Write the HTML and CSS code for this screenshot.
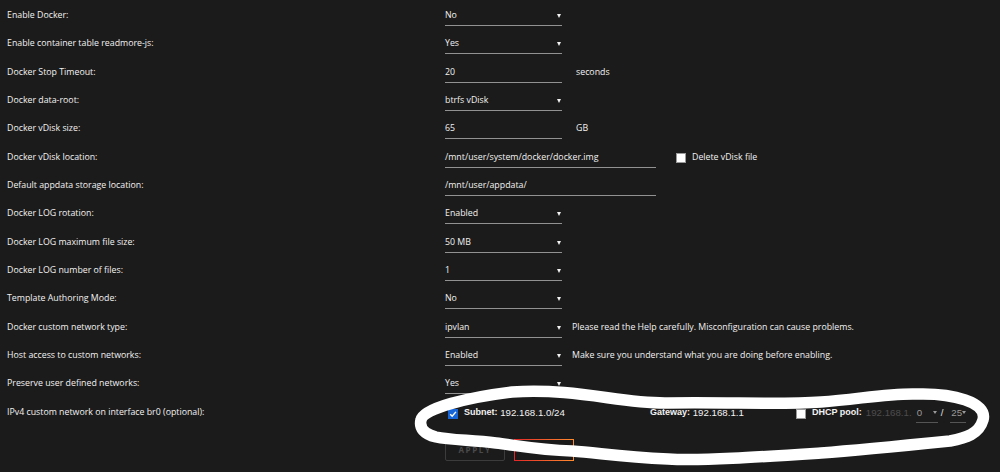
FILE: index.html
```html
<!DOCTYPE html>
<html>
<head>
<meta charset="utf-8">
<link rel="stylesheet" href="styles.css">
</head>
<body>
<div class="page">
  <div class="row"><div class="label">Enable Docker:</div><div class="field"><div class="select sel-s"><span>No</span><span class="caret"></span></div></div></div>
  <div class="row"><div class="label">Enable container table readmore-js:</div><div class="field"><div class="select sel-s"><span>Yes</span><span class="caret"></span></div></div></div>
  <div class="row"><div class="label">Docker Stop Timeout:</div><div class="field"><div class="select sel-s"><span>20</span></div><span class="unit">seconds</span></div></div>
  <div class="row"><div class="label">Docker data-root:</div><div class="field"><div class="select sel-s"><span>btrfs vDisk</span><span class="caret"></span></div></div></div>
  <div class="row"><div class="label">Docker vDisk size:</div><div class="field"><div class="select sel-s"><span>65</span></div><span class="unit">GB</span></div></div>
  <div class="row"><div class="label">Docker vDisk location:</div><div class="field"><div class="select sel-w"><span>/mnt/user/system/docker/docker.img</span></div><span class="box"></span><span class="boxlabel">Delete vDisk file</span></div></div>
  <div class="row"><div class="label">Default appdata storage location:</div><div class="field"><div class="select sel-w"><span>/mnt/user/appdata/</span></div></div></div>
  <div class="row"><div class="label">Docker LOG rotation:</div><div class="field"><div class="select sel-s"><span>Enabled</span><span class="caret"></span></div></div></div>
  <div class="row"><div class="label">Docker LOG maximum file size:</div><div class="field"><div class="select sel-s"><span>50 MB</span><span class="caret"></span></div></div></div>
  <div class="row"><div class="label">Docker LOG number of files:</div><div class="field"><div class="select sel-s"><span>1</span><span class="caret"></span></div></div></div>
  <div class="row"><div class="label">Template Authoring Mode:</div><div class="field"><div class="select sel-s"><span>No</span><span class="caret"></span></div></div></div>
  <div class="row"><div class="label">Docker custom network type:</div><div class="field"><div class="select sel-s"><span>ipvlan</span><span class="caret"></span></div><span class="help">Please read the Help carefully. Misconfiguration can cause problems.</span></div></div>
  <div class="row"><div class="label">Host access to custom networks:</div><div class="field"><div class="select sel-s"><span>Enabled</span><span class="caret"></span></div><span class="help">Make sure you understand what you are doing before enabling.</span></div></div>
  <div class="row"><div class="label">Preserve user defined networks:</div><div class="field"><div class="select sel-s"><span>Yes</span><span class="caret"></span></div></div></div>
  <div class="row"><div class="label">IPv4 custom network on interface br0 (optional):</div>
    <div class="field net">
      <div class="grp subnet">
        <span class="check on"><svg width="10" height="10" viewBox="0 0 10 10"><path d="M2.2 5.2 L4.2 7.2 L7.9 2.9" fill="none" stroke="#fff" stroke-width="1.4"/></svg></span>
        <b>Subnet:</b>&nbsp;<span>192.168.1.0/24</span>
      </div>
      <div class="grp gateway"><b>Gateway:</b>&nbsp;<span>192.168.1.1</span></div>
      <div class="grp dhcp">
        <span class="check"></span>
        <b>DHCP pool:</b>
        <span class="dim">192.168.1.</span>
        <div class="mini mini-a"><span>0</span><span class="caret sm"></span></div>
        <span class="slash">/</span>
        <div class="mini mini-b"><span>25</span><span class="caret sm"></span></div>
      </div>
    </div>
  </div>
  <div class="buttons">
    <span class="btn apply">APPLY</span>
    <span class="btn done">DONE</span>
  </div>
</div>
<svg class="scribble" width="1000" height="472" viewBox="0 0 1000 472">
  <path d="M 421,420 C 423,408 470,397 512,392 C 580,388 620,404 668,403 C 730,402 780,405 821,402 C 860,399 890,393 917,394 C 952,393 988,402 983,420 C 979,434 966,438 950,441 C 900,446 860,450 821,453 C 760,457 700,461 668,459 C 620,457 600,453 572,451 C 540,450 520,446 496,443 C 470,440 450,440 436,437 C 424,434 419,428 421,420 Z" fill="none" stroke="#fff" stroke-width="11.5" stroke-linejoin="round"/>
</svg>
</body>
</html>
```
FILE: styles.css
```css
html, body {
  margin: 0;
  padding: 0;
  background: #1c1b1b;
}
body {
  width: 1000px;
  height: 472px;
  overflow: hidden;
  position: relative;
  color: #f2f2f2;
  font-family: "Open Sans", "Noto Sans", sans-serif;
  font-size: 8.8px;
}
.page {
  padding: 1px 0 0 7px;
}
.row {
  display: flex;
  align-items: flex-start;
  height: 28.33px;
}
.label {
  width: 438px;
  flex: none;
  margin-top: 5px;
  line-height: 19px;
}
.field {
  display: flex;
  align-items: flex-start;
  margin-top: 5px;
  line-height: 19px;
}
.select {
  box-sizing: border-box;
  height: 20px;
  border-bottom: 1px solid #929292;
  display: flex;
  justify-content: space-between;
  align-items: center;
  padding-right: 1px;
}
.sel-s { width: 117px; }
.sel-w { width: 211px; }
.caret {
  width: 0;
  height: 0;
  border-left: 2px solid transparent;
  border-right: 2px solid transparent;
  border-top: 4px solid #f2f2f2;
  margin-top: 1px;
}
.unit { margin-left: 14px; }
.help { margin-left: 10px; }
.box {
  box-sizing: border-box;
  width: 10px;
  height: 10px;
  margin: 5px 6px 0 20px;
  background: #fff;
  border: 1px solid #9a9a9a;
}
.net {
  font-family: "Liberation Sans", Arial, sans-serif;
  font-size: 9.7px;
}
.net b { font-weight: bold; font-size: 9px; }
.grp {
  display: flex;
  align-items: flex-start;
  height: 20px;
}
.subnet { width: 205px; padding-left: 3px; box-sizing: border-box; }
.gateway { width: 146px; }
.check {
  box-sizing: border-box;
  width: 10px;
  height: 10px;
  margin: 6px 6px 0 0;
  background: #fff;
  border: 1px solid #9a9a9a;
  display: block;
}
.check.on {
  background: #1565d8;
  border-color: #1565d8;
  margin-right: 6px;
}
.check.on svg { display: block; margin: -1px 0 0 -1px; }
.dim { color: #4d4d4d; margin-left: 4px; }
.mini {
  box-sizing: border-box;
  height: 20px;
  border-bottom: 1px solid #555;
  display: flex;
  justify-content: space-between;
  align-items: center;
  color: #9a9a9a;
}
.mini-a { width: 22px; margin-left: 4px; padding: 0 1px; }
.mini-b { width: 16px; padding: 0 1px; }
.caret.sm {
  border-top-color: #9a9a9a;
  border-left-width: 2px;
  border-right-width: 2px;
  border-top-width: 3.5px;
}
.slash { margin: 0 7px 0 3px; color: #e0e0e0; }
.buttons {
  display: flex;
  gap: 9px;
  margin: 13px 0 0 438px;
}
.btn {
  box-sizing: border-box;
  width: 60px;
  height: 22px;
  display: flex;
  align-items: center;
  justify-content: center;
  font-weight: bold;
  font-size: 8px;
  letter-spacing: 1.6px;
}
.apply {
  border: 1px solid #3c3c3c;
  border-radius: 2px;
  color: #4a4a4a;
}
.done {
  border: 1px solid;
  border-image: linear-gradient(90deg, #e22828, #ff8c2f) 1;
  color: #f07030;
}
.scribble {
  position: absolute;
  left: 0;
  top: 0;
  pointer-events: none;
}
```
